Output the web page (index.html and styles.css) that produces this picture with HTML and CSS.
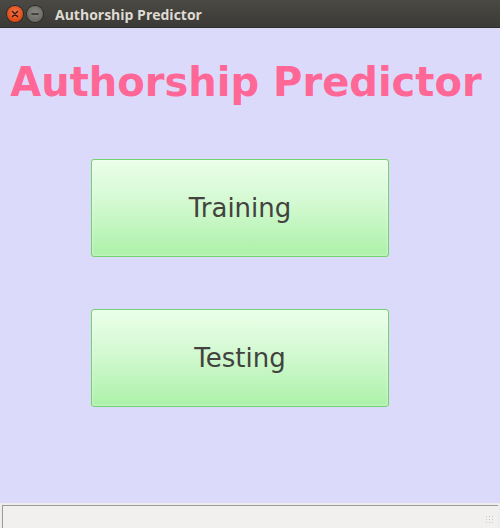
FILE: index.html
```html
<!DOCTYPE html>
<html>
<head>
<meta charset="utf-8">
<link rel="stylesheet" href="styles.css">
</head>
<body>
<div class="window">
  <div class="titlebar">
    <div class="controls">
      <span class="ctl close">
        <svg width="10" height="10" viewBox="0 0 10 10"><path d="M2.5 2.5 L7.5 7.5 M7.5 2.5 L2.5 7.5" stroke="#3b1a10" stroke-width="1.5" stroke-linecap="round"/></svg>
      </span>
      <span class="ctl min">
        <svg width="10" height="10" viewBox="0 0 10 10"><path d="M2 5 H8" stroke="#2e2e2b" stroke-width="1.6" stroke-linecap="round"/></svg>
      </span>
    </div>
    <div class="wtitle">Authorship Predictor</div>
  </div>
  <div class="content">
    <h1 class="apptitle">Authorship Predictor</h1>
    <div class="buttons">
      <button class="btn">Training</button>
      <button class="btn">Testing</button>
    </div>
  </div>
  <div class="statusbar">
    <div class="status"><span class="grip"></span></div>
  </div>
</div>
</body>
</html>
```

FILE: styles.css
```css
html, body {
  margin: 0;
  padding: 0;
  width: 500px;
  height: 528px;
  overflow: hidden;
}
.window {
  width: 500px;
  height: 528px;
  display: flex;
  flex-direction: column;
  background: #dcdafa;
}
.titlebar {
  height: 28px;
  flex: none;
  display: flex;
  align-items: center;
  background: linear-gradient(#4a4944, #3b3a36);
  border-bottom: 1px solid #2f2e2b;
  box-sizing: border-box;
}
.controls {
  display: flex;
  gap: 4px;
  padding-left: 7px;
}
.ctl {
  width: 16px;
  height: 16px;
  border-radius: 50%;
  display: flex;
  align-items: center;
  justify-content: center;
}
.close {
  background: radial-gradient(circle at 50% 40%, #f6774a, #dd4814 70%, #b53a10);
  box-shadow: 0 0 0 1px #2c2b28;
}
.min {
  background: radial-gradient(circle at 50% 40%, #88877f, #6c6b65 70%, #57564f);
  box-shadow: 0 0 0 1px #2c2b28;
}
.wtitle {
  margin-left: 12px;
  font-family: "Open Sans", "DejaVu Sans", sans-serif;
  font-weight: 700;
  font-size: 14px;
  color: #dfdbd2;
  padding-top: 1px;
}
.content {
  flex: 1;
  display: flex;
  flex-direction: column;
  align-items: center;
}
.apptitle {
  margin: 30px 8px 0 0;
  white-space: nowrap;
  font-family: "DejaVu Sans", sans-serif;
  font-weight: 700;
  font-size: 40px;
  line-height: 48px;
  color: #fe6796;
}
.buttons {
  margin: 53px 20px 0 0;
  display: flex;
  flex-direction: column;
  gap: 52px;
}
.btn {
  width: 298px;
  height: 98px;
  border: 1px solid #6fd46f;
  border-radius: 3px;
  background: linear-gradient(#ebffea 0%, #d3f9d1 45%, #acf1a8 100%);
  box-shadow: inset 0 0 3px rgba(255,255,255,0.6);
  font-family: "DejaVu Sans", sans-serif;
  font-size: 26px;
  color: #42423e;
  padding: 0;
  cursor: pointer;
}
.statusbar {
  height: 25px;
  flex: none;
  background: #eeedeb;
  padding: 2px 2px 0 2px;
  box-sizing: border-box;
}
.status {
  height: 22px;
  border-top: 1px solid #9c9a97;
  border-left: 1px solid #9c9a97;
  background: #f1f0ee;
  position: relative;
}
.grip {
  position: absolute;
  right: 3px;
  bottom: 3px;
  width: 10px;
  height: 10px;
  background-image: radial-gradient(circle, #c9c7c3 0.8px, transparent 1px);
  background-size: 3px 3px;
}
```
